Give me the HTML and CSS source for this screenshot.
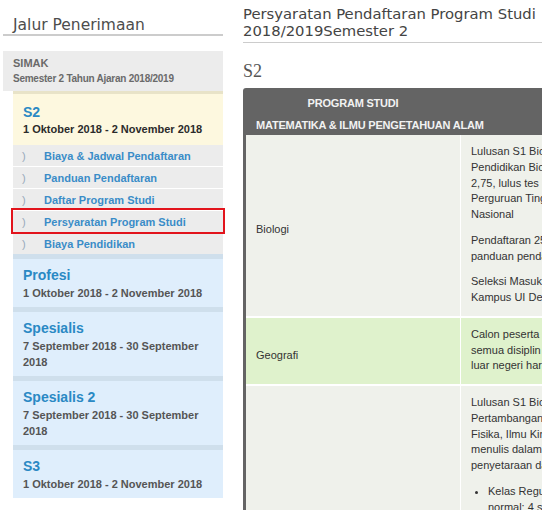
FILE: index.html
```html
<!DOCTYPE html>
<html lang="id">
<head>
  <meta charset="UTF-8">
  <meta name="viewport" content="width=device-width, initial-scale=1.0">
  <title>Persyaratan Program Studi - SIMAK UI</title>
  <link rel="stylesheet" href="styles.css">
</head>
<body>

<div class="page">
  <aside class="sidebar">
    <h3 class="sidebar-title">Jalur Penerimaan</h3>

    <div class="intake">
      <div class="intake-head">
        <strong>SIMAK</strong>
        <span>Semester 2 Tahun Ajaran 2018/2019</span>
      </div>

      <div class="track track-open">
        <div class="track-head">
          <h4>S2</h4>
          <p>1 Oktober 2018 - 2 November 2018</p>
        </div>
        <ul class="track-menu">
          <li><a href="#">Biaya &amp; Jadwal Pendaftaran</a></li>
          <li><a href="#">Panduan Pendaftaran</a></li>
          <li><a href="#">Daftar Program Studi</a></li>
          <li class="current"><a href="#">Persyaratan Program Studi</a></li>
          <li><a href="#">Biaya Pendidikan</a></li>
        </ul>
      </div>

      <div class="track">
        <div class="track-head">
          <h4>Profesi</h4>
          <p>1 Oktober 2018 - 2 November 2018</p>
        </div>
      </div>
      <div class="track">
        <div class="track-head">
          <h4>Spesialis</h4>
          <p>7 September 2018 - 30 September 2018</p>
        </div>
      </div>
      <div class="track">
        <div class="track-head">
          <h4>Spesialis 2</h4>
          <p>7 September 2018 - 30 September 2018</p>
        </div>
      </div>
      <div class="track">
        <div class="track-head">
          <h4>S3</h4>
          <p>1 Oktober 2018 - 2 November 2018</p>
        </div>
      </div>
    </div>
  </aside>

  <main class="main">
    <h2 class="page-title">Persyaratan Pendaftaran Program Studi 2018/2019Semester 2</h2>
    <h3 class="level-title">S2</h3>

    <table class="req-table">
      <thead>
        <tr>
          <th class="col-prodi">PROGRAM STUDI</th>
          <th>PERSYARATAN</th>
        </tr>
        <tr>
          <th class="faculty" colspan="2">MATEMATIKA &amp; ILMU PENGETAHUAN ALAM</th>
        </tr>
      </thead>
      <tbody>
        <tr>
          <td>Biologi</td>
          <td>
            <p>Lulusan S1 Biologi, Farmasi, Kedokteran, Pertanian atau<br>Pendidikan Biologi dengan IPK minimal<br>2,75, lulus tes masuk yang diselenggarakan UI, dari<br>Perguruan Tinggi terakreditasi Badan Akreditasi<br>Nasional</p>
            <p>Pendaftaran 25 September - 30 November 2018, lihat<br>panduan pendaftaran di laman SIMAK UI</p>
            <p>Seleksi Masuk dilaksanakan 9 Desember 2018 di<br>Kampus UI Depok</p>
          </td>
        </tr>
        <tr class="row-green">
          <td>Geografi</td>
          <td>
            <p>Calon peserta adalah lulusan S1 Geografi dan lulusan<br>semua disiplin ilmu dengan IPK minimal 2,75. Lulusan<br>luar negeri harus melampirkan surat penyetaraan ijazah</p>
          </td>
        </tr>
        <tr>
          <td>Ilmu Kelautan</td>
          <td>
            <p>Lulusan S1 Biologi, Geologi, Teknik Geologi, Teknik<br>Pertambangan, Teknik Lingkungan, Kimia, Oseanografi,<br>Fisika, Ilmu Kimia, Ilmu Kelautan, serta mampu membaca dan<br>menulis dalam bahasa Inggris. Lulusan luar negeri wajib<br>penyetaraan dari Kemristekdikti</p>
            <ul>
              <li>Kelas Reguler: perkuliahan hari Senin - Jumat, masa studi<br>normal: 4 semester</li>
              <li>Kelas Khusus: perkuliahan hari Jumat - Sabtu, masa studi<br>normal: 4 semester</li>
              <li>Melampirkan surat rekomendasi dari dua orang<br>dosen atau atasan</li>
              <li>Melampirkan rencana penelitian maksimal<br>dua halaman</li>
              <li>Bersedia mengikuti matrikulasi apabila<br>dinyatakan perlu oleh program studi</li>
              <li>Sertifikat TOEFL atau setara dengan nilai<br>minimal 450</li>
            </ul>
          </td>
        </tr>
      </tbody>
    </table>
  </main>
</div>

</body>
</html>
```

FILE: styles.css
```css
:root {
  --grey-bg: #ececec;
  --link-blue: #3a8cc8;
  --title-blue: #2a89c4;
  --heading: #4d4d4d;
  --rule: #cccccc;
}
* { margin: 0; padding: 0; box-sizing: border-box; }
html, body { overflow: hidden; }
body {
  background: #fff;
  color: #333;
  font-family: "Liberation Sans", Arial, sans-serif;
}

.page { display: flex; gap: 20px; padding-left: 3px; }

/* ---------- sidebar ---------- */
.sidebar { width: 220px; flex: none; }
.sidebar-title {
  margin: 16px 0 15px;
  padding-left: 10px;
  font: normal 15.5px/18px "DejaVu Sans", sans-serif;
  color: var(--heading);
  border-bottom: 2px solid var(--rule);
}

.intake-head {
  background: var(--grey-bg);
  padding: 5px 10px;
  color: #6a6a6a;
  line-height: 15px;
}
.intake-head strong { display: block; font-size: 11px; }
.intake-head span { display: block; font-size: 10px; font-weight: bold; letter-spacing: -0.25px; }

.track {
  margin-left: 10px;
  background: #dfeefc;
  border-top: 5px solid #cfdfec;
}
.track-head { padding: 6px 10px; }
.track-head h4 { font-size: 14px; line-height: 20px; color: var(--title-blue); }
.track-head p { font-size: 11px; line-height: 16px; font-weight: bold; color: #555; }

.track-open { background: #fdf8df; border-top: 3px solid #e8e3c8; }
.track-open .track-head { padding: 9px 10px 8px; }
.track-open .track-head h4 { line-height: 18px; }
.track-open .track-head p { color: #2b2b2b; }

.track-menu { list-style: none; }
.track-menu li {
  display: flex;
  align-items: center;
  height: 21px;
  padding-left: 9px;
  background: var(--grey-bg);
}
.track-menu li + li { height: 22px; border-top: 1px solid #fff; }
.track-menu li::before {
  content: ")";
  width: 22px;
  font-size: 11px;
  color: #98a9bb;
}
.track-menu a {
  color: var(--link-blue);
  font-size: 11px;
  font-weight: bold;
  text-decoration: none;
}
.track-menu li.current { outline: 2px solid #e2141c; }

/* ---------- content ---------- */
.main { flex: 1; min-width: 0; }
.page-title {
  margin-top: 5px;
  padding-bottom: 3px;
  font: normal 14.8px/17px "DejaVu Sans", sans-serif;
  color: #444;
  border-bottom: 1px solid var(--rule);
}
.level-title {
  margin: 18px 0 7px;
  font: normal 18px/20px "Liberation Serif", serif;
  color: #555;
}

.req-table {
  width: 600px;
  border-collapse: separate;
  border-spacing: 0;
  border: 3px solid #646464;
  border-radius: 3px 3px 0 0;
  font-size: 11px;
}
.req-table th {
  background: #646464;
  color: #f2f2f2;
  font-size: 11px;
  letter-spacing: -0.2px;
  line-height: 13px;
  padding: 6px 10px 3px;
}
.req-table .col-prodi { width: 214px; }
.req-table th.faculty { text-align: left; }

.req-table td {
  background: #eff1eb;
  padding: 9px 10px 0;
  line-height: 15.75px;
  vertical-align: middle;
  color: #333;
}
.req-table td + td { border-left: 1px solid #fff; vertical-align: top; }
.req-table tbody tr + tr td { border-top: 2px solid #fff; }
.req-table .row-green td { background: #dff2cc; }
.req-table td p { margin-bottom: 10px; }
.req-table td ul { margin: 2px 0 10px; padding-left: 17px; }
```
